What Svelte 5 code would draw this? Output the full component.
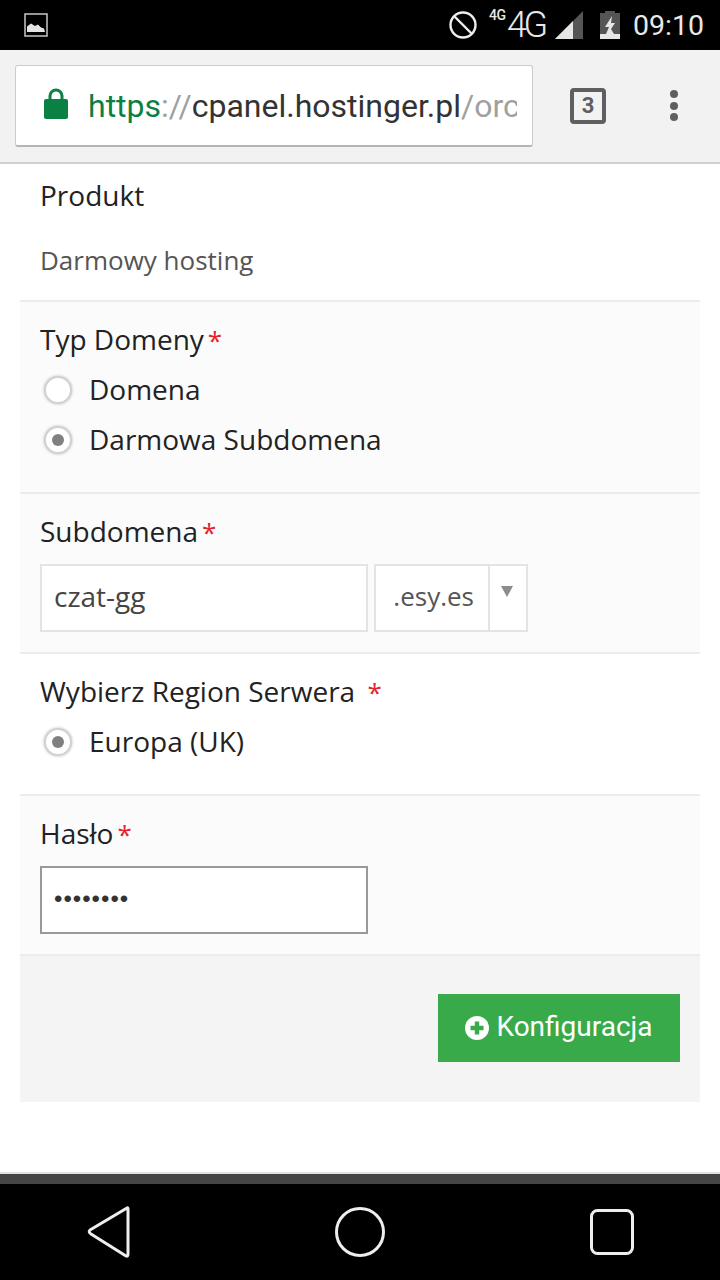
<script>
  const lockColor = '#0b8043';
</script>

<div class="screen">
  <header class="status">
    <svg class="pic" width="24" height="24" viewBox="0 0 24 24" aria-hidden="true">
      <rect x="1" y="1" width="22" height="22" fill="#000" stroke="#bbb" stroke-width="1.6"/>
      <path d="M3 19 V13.5 L7 10.5 L11 13 L14 11.5 L17 14.5 L20 15.5 L21 19 Z" fill="#e4e4e4"/>
    </svg>
    <span class="grow"></span>
    <svg class="block" width="28" height="28" viewBox="0 0 28 28" aria-hidden="true">
      <circle cx="14" cy="14" r="12.5" fill="none" stroke="#eee" stroke-width="2.4"/>
      <path d="M5 5 L23 23" stroke="#eee" stroke-width="2.4"/>
    </svg>
    <span class="net-small">4G</span>
    <span class="net-big">4G</span>
    <svg class="signal" width="28" height="28" viewBox="0 0 28 28" aria-hidden="true">
      <path d="M0 28 L28 0 V28 Z" fill="#555"/>
      <path d="M0 28 L18 10 V28 Z" fill="#e6e6e6"/>
    </svg>
    <svg class="battery" width="20" height="28" viewBox="0 0 20 28" aria-hidden="true">
      <path d="M5 2 V0 H15 V2 H20 V28 H0 V2 Z" fill="#555"/>
      <path d="M0 23 H20 V28 H0 Z" fill="#e6e6e6"/>
      <path d="M12 5 L5 16 H9 L6 23 H14 L11 18 L15 12 H11 Z" fill="#e6e6e6"/>
    </svg>
    <span class="time">09:10</span>
  </header>

  <div class="toolbar">
    <div class="omnibox">
      <svg class="lock" width="26" height="32" viewBox="0 0 26 32" aria-hidden="true">
        <path d="M7 14 V9 a6 6 0 0 1 12 0 V14" fill="none" stroke={lockColor} stroke-width="3"/>
        <rect x="1" y="12" width="24" height="20" rx="2" fill={lockColor}/>
      </svg>
      <div class="url"><span class="scheme">https</span><span class="sep">://</span><span class="host">cpanel.hostinger.pl</span><span class="sep">/orc</span></div>
    </div>
    <div class="tabs">3</div>
    <div class="menu"><i></i><i></i><i></i></div>
  </div>

  <main class="page">
    <section class="sec product">
      <div class="label">Produkt</div>
      <div class="value">Darmowy hosting</div>
    </section>

    <section class="sec tint type">
      <div class="label">Typ Domeny<span class="req">*</span></div>
      <div class="radio"><span class="dot"></span>Domena</div>
      <div class="radio"><span class="dot on"></span>Darmowa Subdomena</div>
    </section>

    <section class="sec tint sub">
      <div class="label">Subdomena<span class="req">*</span></div>
      <div class="fields">
        <div class="input">czat-gg</div>
        <div class="select">
          <span class="sel-val">.esy.es</span>
          <span class="sel-arrow"></span>
        </div>
      </div>
    </section>

    <section class="sec region">
      <div class="label">Wybierz Region Serwera <span class="req wide">*</span></div>
      <div class="radio"><span class="dot on"></span>Europa (UK)</div>
    </section>

    <section class="sec tint pass">
      <div class="label">Hasło<span class="req">*</span></div>
      <div class="input focus">••••••••</div>
    </section>

    <div class="footer">
      <button class="cta">
        <svg width="24" height="24" viewBox="0 0 24 24" aria-hidden="true">
          <circle cx="12" cy="12" r="12" fill="#fff"/>
          <path d="M12 5.5 V18.5 M5.5 12 H18.5" stroke="#38aa4a" stroke-width="4.4"/>
        </svg>
        Konfiguracja
      </button>
    </div>
  </main>

  <div class="shelf"></div>
  <nav class="nav">
    <svg width="44" height="54" viewBox="0 0 44 54" aria-hidden="true">
      <path d="M40 3 Q41 2 41 5 V49 Q41 52 39 51 L4 29 Q1 27 3 25 Z" fill="none" stroke="#eee" stroke-width="3" stroke-linejoin="round"/>
    </svg>
    <svg width="50" height="50" viewBox="0 0 50 50" aria-hidden="true">
      <circle cx="25" cy="25" r="23.5" fill="none" stroke="#eee" stroke-width="3"/>
    </svg>
    <svg class="recents" width="44" height="46" viewBox="0 0 44 46" aria-hidden="true">
      <rect x="1.5" y="1.5" width="41" height="43" rx="6" fill="none" stroke="#eee" stroke-width="3"/>
    </svg>
  </nav>
</div>

<style>
  :global(body) { margin: 0; background: #fff; }
  .screen { width: 720px; height: 1280px; display: flex; flex-direction: column; overflow: hidden; font-family: "Open Sans", sans-serif; color: #222; }

  .status { height: 50px; flex: none; background: #000; display: flex; align-items: center; padding: 0 16px 0 24px; box-sizing: border-box; font-family: Roboto, sans-serif; color: #e8e8e8; }
  .pic { flex: none; }
  .grow { flex: 1; }
  .block { margin-right: 12px; }
  .net-small { font-size: 14px; font-weight: 500; width: 18px; margin-top: -20px; letter-spacing: -0.5px; }
  .net-big { font-size: 36px; font-weight: 300; letter-spacing: -3.5px; width: 40px; }
  .signal { margin-left: 8px; }
  .battery { margin-left: 17px; }
  .time { font-size: 28.5px; margin-left: 13px; }

  .toolbar { height: 114px; flex: none; box-sizing: border-box; background: #f2f2f2; border-bottom: 2px solid #cfcfcf; display: flex; align-items: center; padding: 0 0 0 15px; }
  .omnibox { width: 518px; height: 82px; box-sizing: border-box; background: #fff; border: 1px solid #ccc; border-bottom: 2px solid #b5b5b5; border-radius: 3px; display: flex; align-items: center; padding-left: 27px; flex: none; margin-top: -1px; }
  .lock { flex: none; margin-top: -4px; }
  .url { margin-left: 19px; margin-top: 2px; width: 429px; overflow: hidden; white-space: nowrap; font-family: Roboto, sans-serif; font-size: 32px; color: #333; }
  .scheme { color: #0b8043; }
  .sep { color: #a0a0a0; }
  .tabs { width: 36px; height: 36px; box-sizing: border-box; border: 4px solid #5f5f5f; border-radius: 4px; margin-left: 37px; margin-top: -1px; display: flex; align-items: center; justify-content: center; font-family: Roboto, sans-serif; font-weight: 700; font-size: 22px; color: #5f5f5f; }
  .menu { margin-left: 64px; display: flex; flex-direction: column; gap: 3.6px; margin-top: -1px; }
  .menu i { display: block; width: 8px; height: 8px; border-radius: 50%; background: #5f5f5f; }

  .page { flex: 1; padding: 0 20px; background: #fff; }
  .sec { padding: 0 20px; border-bottom: 2px solid #ececec; box-sizing: border-box; }
  .tint { background: #fbfbfb; }
  .label { font-size: 28px; line-height: 36px; color: #222; }
  .req { color: #e2232a; margin-left: 4px; font-size: 26px; }
  .req.wide { margin-left: 5px; }

  .product { height: 138px; padding-top: 13px; }
  .value { font-size: 26px; line-height: 36px; color: #555; margin-top: 29px; }
  .type { height: 192px; padding-top: 19px; }
  .sub { height: 160px; padding-top: 19px; }
  .region { height: 142px; padding-top: 19px; }
  .pass { height: 160px; padding-top: 19px; }
  .radio { height: 50px; box-sizing: border-box; padding-bottom: 2px; display: flex; align-items: center; font-size: 28px; color: #222; }
  .type .label + .radio { margin-top: 7px; }
  .region .label + .radio { margin-top: 7px; }
  .dot { width: 28px; height: 28px; box-sizing: border-box; border-radius: 50%; background: #fff; border: 2px solid #d2d2d2; box-shadow: 0 0 3px #bbb; margin: 2px 17px 0 4px; display: flex; align-items: center; justify-content: center; flex: none; }
  .dot.on::after { content: ""; width: 12px; height: 12px; border-radius: 50%; background: #808080; }

  .fields { display: flex; gap: 6px; margin-top: 14px; }
  .input { width: 328px; height: 68px; box-sizing: border-box; background: #fff; border: 2px solid #e4e4e4; padding: 0 0 4px 12px; display: flex; align-items: center; font-size: 28px; color: #444; }
  .pass .input { margin-top: 14px; }
  .input.focus { border-color: #999; color: #333; font-size: 24px; letter-spacing: 1px; font-family: "Liberation Sans", sans-serif; padding-bottom: 2px; }
  .select { width: 154px; height: 68px; box-sizing: border-box; background: #fff; border: 2px solid #e4e4e4; display: flex; }
  .sel-val { width: 114px; box-sizing: border-box; border-right: 2px solid #e4e4e4; display: flex; align-items: center; justify-content: flex-end; padding: 0 14px 4px 0; font-size: 26px; color: #555; }
  .sel-arrow { margin: 20px 0 0 11px; width: 0; height: 0; border-left: 6px solid transparent; border-right: 6px solid transparent; border-top: 11px solid #8c8c8c; }

  .footer { height: 146px; background: #f4f4f4; display: flex; justify-content: flex-end; align-items: flex-start; padding: 38px 20px 0 0; box-sizing: border-box; }
  .cta { width: 242px; height: 68px; background: #38aa4a; border: 0; border-radius: 0; color: #fff; font-family: Roboto, sans-serif; font-size: 28px; display: flex; align-items: center; justify-content: center; gap: 7px; padding: 0 0 3px; }
  .cta svg { margin-top: 2px; }

  .shelf { height: 12px; flex: none; background: #454545; border-top: 2px solid #e2e2e2; box-sizing: border-box; }
  .nav { height: 96px; flex: none; background: #000; display: grid; grid-template-columns: 218px 284px 218px; align-items: center; justify-items: center; }
  .recents { margin-left: 2px; }
</style>
